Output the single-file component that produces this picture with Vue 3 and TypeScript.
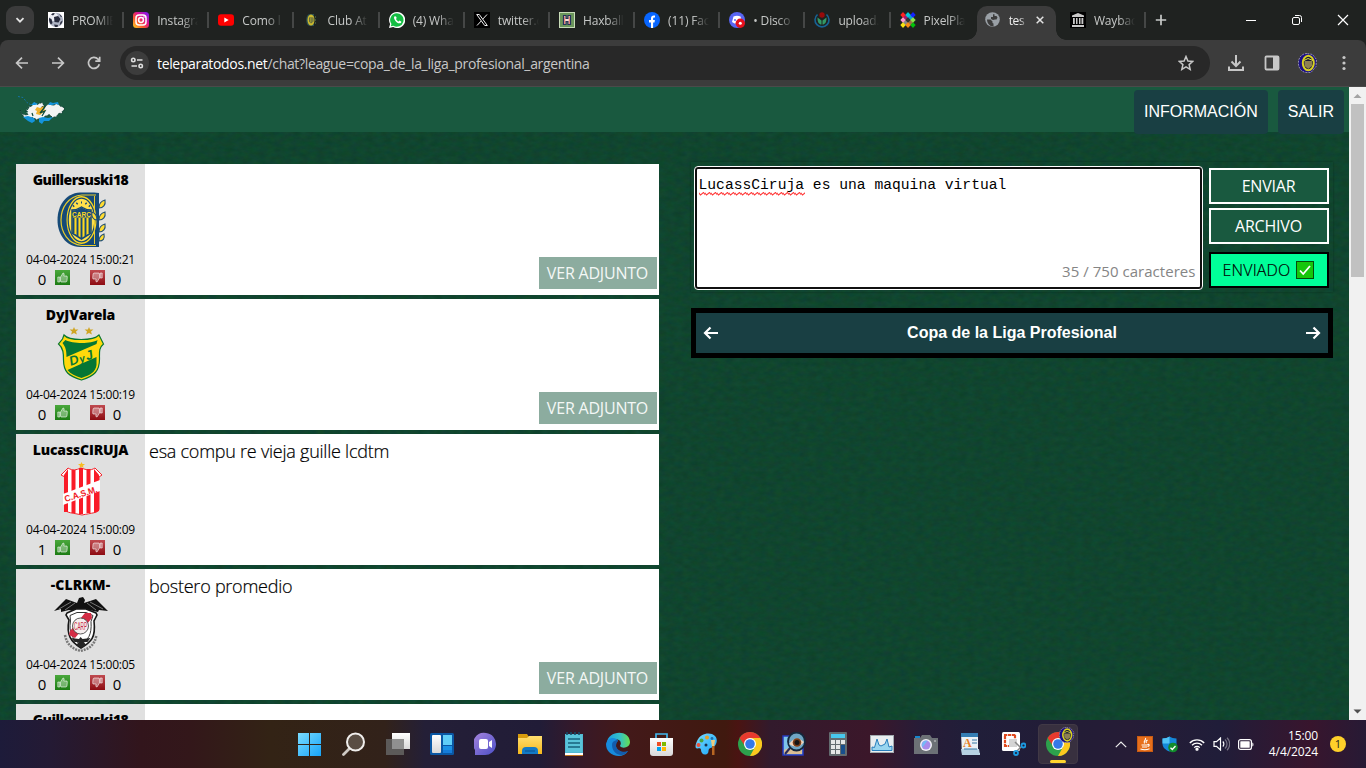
<script setup lang="ts">
interface Tab {
  icon: string
  title: string
  active?: boolean
}
interface Post {
  user: string
  crest: string
  date: string
  up: number
  down: number
  text?: string
  attachment?: boolean
}

const tabs: Tab[] = [
  { icon: 'ball', title: 'PROMIE' },
  { icon: 'instagram', title: 'Instagra' },
  { icon: 'youtube', title: 'Como l' },
  { icon: 'club', title: 'Club At' },
  { icon: 'whatsapp', title: '(4) Wha' },
  { icon: 'x', title: 'twitter.c' },
  { icon: 'haxball', title: 'Haxball' },
  { icon: 'facebook', title: '(11) Fac' },
  { icon: 'discord', title: '• Disco' },
  { icon: 'commons', title: 'upload.' },
  { icon: 'pixel', title: 'PixelPla' },
  { icon: 'globe', title: 'tes', active: true },
  { icon: 'archive', title: 'Waybac' },
]

const posts: Post[] = [
  { user: 'Guillersuski18', crest: 'rosario', date: '04-04-2024 15:00:21', up: 0, down: 0, attachment: true },
  { user: 'DyJVarela', crest: 'defensa', date: '04-04-2024 15:00:19', up: 0, down: 0, attachment: true },
  { user: 'LucassCIRUJA', crest: 'sanmartin', date: '04-04-2024 15:00:09', up: 1, down: 0, text: 'esa compu re vieja guille lcdtm' },
  { user: '-CLRKM-', crest: 'river', date: '04-04-2024 15:00:05', up: 0, down: 0, text: 'bostero promedio', attachment: true },
]

const apps = [
  'start', 'search', 'taskview', 'widgets', 'chat', 'folder', 'notepad', 'edge', 'store',
  'paint', 'chrome', 'magnify', 'calc', 'perf', 'camera', 'wordpad', 'snip',
]
</script>

<template>
  <div class="desktop">
    <svg class="sprites" width="0" height="0">
      <defs>
        <filter id="weave" x="0" y="0" width="100%" height="100%" color-interpolation-filters="sRGB">
          <feTurbulence type="fractalNoise" baseFrequency=".12 .2" numOctaves="4" seed="7" />
          <feColorMatrix values=".05 0 0 0 .038  0 .06 0 0 .240  0 0 .07 0 .147  0 0 0 0 1" />
        </filter>
        <pattern id="zigzag" width="6" height="4" patternUnits="userSpaceOnUse"><path d="M-1 0 1.500 3 4.500.5 7 3.500" fill="none" stroke="#ff3b3b" stroke-width="1.100" /></pattern>
        <linearGradient id="green" x2="0" y2="1"><stop stop-color="#4aa83c" /><stop offset="1" stop-color="#1c7c14" /></linearGradient>
        <linearGradient id="red" x2="0" y2="1"><stop stop-color="#c04a50" /><stop offset="1" stop-color="#8d0c12" /></linearGradient>
        <linearGradient id="insta" x1="0" y1="1" x2="1" y2="0"><stop stop-color="#ffd521" /><stop offset=".35" stop-color="#f8572d" /><stop offset=".6" stop-color="#e0148c" /><stop offset="1" stop-color="#6f1cff" /></linearGradient>
        <linearGradient id="winblue" x2="1" y2="1"><stop stop-color="#7adcff" /><stop offset="1" stop-color="#17a4f8" /></linearGradient>
        <linearGradient id="chatfill" x2="1" y2="1"><stop stop-color="#a684dc" /><stop offset="1" stop-color="#4c50c8" /></linearGradient>
        <linearGradient id="folderfill" x2="0" y2="1"><stop stop-color="#ffdf70" /><stop offset="1" stop-color="#f5b81c" /></linearGradient>
        <linearGradient id="edgetop" x2="1"><stop stop-color="#1c9ce0" /><stop offset=".55" stop-color="#33c1c9" /><stop offset="1" stop-color="#66e04f" /></linearGradient>
        <linearGradient id="paper" x2="0" y2="1"><stop stop-color="#fff" /><stop offset="1" stop-color="#d8d8d8" /></linearGradient>
      </defs>

      <symbol id="ball" viewBox="0 0 16 16"><rect width="16" height="16" fill="#fff" /><circle cx="8" cy="8" r="7.200" fill="#aeb4c4" /><circle cx="6" cy="5" r="4" fill="#eceef4" /><path d="M6 5l4-1 2.500 3-2 3.500-4-.5zM1 6l2.500 1 1 4-1.500 1.500C1.500 11 .8 8 1 6zM6 12.500l4 .5-.5 2H7zM12.500 10l2-1.500c0 2-1.500 4-3 5zM3 2.500l2-1.500 2 .6-2 1.800zM11 1.500l3 3-1 .8z" fill="#272b3c" /></symbol>
      <symbol id="instagram" viewBox="0 0 16 16"><rect width="16" height="16" rx="3.500" fill="url(#insta)" /><rect x="3" y="3" width="10" height="10" rx="3" fill="none" stroke="#fff" stroke-width="1.500" /><circle cx="8" cy="8" r="2.400" fill="none" stroke="#fff" stroke-width="1.500" /><circle cx="11" cy="5" r=".8" fill="#fff" /></symbol>
      <symbol id="youtube" viewBox="0 0 16 16"><rect y="2.300" width="16" height="11.400" rx="3" fill="#f00" /><path d="M6.300 5.500v5L10.700 8z" fill="#fff" /></symbol>
      <symbol id="club" viewBox="0 0 16 16"><path d="M7 2c-5 0-5 12 0 12h4V2z" fill="#2c5153" /><ellipse cx="8" cy="8" rx="3.500" ry="5.600" fill="#cdb92c" /><path d="M6 5.500h4.500v4L8 11.500 6 9.500z" fill="#4a5d45" /><path d="M7.300 6v4.500M9 6v4.500" stroke="#cdb92c" stroke-width=".7" /><path d="M12.500 4v9" stroke="#3a563e" stroke-dasharray="2 1" /></symbol>
      <symbol id="whatsapp" viewBox="0 0 16 16"><path d="M8 0a8 8 0 0 0-6.900 12L0 16l4.200-1.100A8 8 0 1 0 8 0z" fill="#fff" /><path d="M8 1.300A6.700 6.700 0 0 0 2.500 12l-.7 2.300 2.500-.6A6.700 6.700 0 1 0 8 1.300z" fill="#14bd43" /><path d="M5.700 4.200c-2.400 1.400 2.200 8.200 5.600 7 1.500-.6 1.100-1.800.4-2l-1.200-.7-.8 1c-1-.3-2.300-1.400-2.700-2.500l.7-.9-.7-1.700z" fill="#fff" /></symbol>
      <symbol id="x" viewBox="0 0 16 16"><rect width="16" height="16" fill="#000" /><path d="M2.700 2.500h2.600l8 11h-2.600zM13 2.500 8.700 7.200M7.200 9 3 13.500" fill="none" stroke="#eee" /></symbol>
      <symbol id="haxball" viewBox="0 0 16 16"><rect width="16" height="16" fill="#c8dcb8" /><rect x="1" y="1" width="14" height="14" fill="#6a965b" /><path d="M4.500 3.500h2.500v3h2v-3h2.500v9H9V9.500H7v3H4.500z" fill="#f7e2d8" stroke="#26315c" stroke-width="1.200" /><path d="M5.700 4.500v7.500M10.300 4.500v7.500" stroke="#df6053" stroke-width=".8" /></symbol>
      <symbol id="facebook" viewBox="0 0 16 16"><circle cx="8" cy="8" r="8" fill="#0866ff" /><path d="M7 16v-5.500H5V8h2V6.500C7 4 8.200 3.200 11 3.500v2.100c-1.600-.1-1.900.3-1.900 1.300V8h1.800l-.4 2.500H9.100V16z" fill="#fff" /></symbol>
      <symbol id="discord" viewBox="0 0 16 16"><circle cx="8" cy="8" r="8" fill="#5865f2" /><path d="M4.500 4.500c2-1 5-1 7 0l1.500 5-2.500 2h-5L3 10z" fill="#fff" /><circle cx="6" cy="8" r="1" fill="#5865f2" /><circle cx="11.300" cy="11.300" r="4.700" fill="#e5101d" /><circle cx="11.300" cy="11.300" r="1.500" fill="#fff" /></symbol>
      <symbol id="commons" viewBox="0 0 16 16"><path d="M3.500 2.500a7 7 0 1 0 9 0" fill="none" stroke="#176395" stroke-width="1.600" /><path d="M3.500 5.500c0 5 1.500 7 4 7V8.500zM12.500 5.500c0 5-1.500 7-4 7V8.500z" fill="#339966" /><circle cx="8" cy="3" r="2.700" fill="#970b0b" /></symbol>
      <symbol id="pixel" viewBox="0 0 16 16"><path d="M5.500 2.500l3 3-3 3-3-3z" fill="#a3166b" /><path d="M10.500 2.500l3 3-3 3-3-3z" fill="#099dce" /><path d="M5.500 7.500l3 3-3 3-3-3z" fill="#888" /><path d="M10.500 7.500l3 3-3 3-3-3z" fill="#9c724b" /><path d="M3 0l2.700 3L3 5.700.3 3z" fill="#f22" /><path d="M8 0l2.700 3L8 5.700 5.300 3z" fill="#00c9d8" /><path d="M13 0l2.700 3L13 5.700 10.300 3z" fill="#1422ff" /><path d="M3 5.300 5.700 8 3 10.700.3 8z" fill="#ff9bd1" /><path d="M8 5.300 10.700 8 8 10.700 5.300 8z" fill="#333" /><path d="M13 5.300 15.700 8 13 10.700 10.300 8z" fill="#8ce64c" /><path d="M3 10.300 5.700 13 3 16 .3 13z" fill="#f8e512" /><path d="M8 10.300l2.700 2.700L8 16l-2.700-3z" fill="#fa8a16" /><path d="M13 10.300l2.700 2.700L13 16l-2.700-3z" fill="#00c20b" /></symbol>
      <symbol id="globe" viewBox="0 0 16 16"><circle cx="7.500" cy="7.500" r="7.300" fill="#9aa0a6" /><path d="M2 7.500h3.500l2 2v1.500l1 .5v3c-4 0-6.500-3.500-6.500-7zM8 2.200h1.500V4h2l1 1.500-1 2H10L8 8 6 7V5h2V3z" fill="#3c3c3c" /></symbol>
      <symbol id="archive" viewBox="0 0 16 16"><rect width="16" height="16" fill="#000" /><path d="M2 3.500 8 1l6 2.500V5H2zM2 13h12v2H2zM3 6h1.800v6H3zM6 6h1.500v6H6zM9 6h1.500v6H9zM11.500 6h1.800v6h-1.800z" fill="#c8c8c8" /></symbol>
      <symbol id="profile" viewBox="0 0 20 20"><path d="M9 .5C-2.500.5-2.500 19.500 9 19.500h4l5-6 .500-7-4-5z" fill="#1b0f86" stroke="#aaa6bd" stroke-width=".8" stroke-dasharray="2 1" /><ellipse cx="10.300" cy="10" rx="5.500" ry="7.300" fill="#171b32" stroke="#d7d022" stroke-width="2" /><path d="M6.500 8h7.500v5l-3.700 3-3.800-3z" fill="#8d7f52" /><path d="M6 7.500l4-2 5 2" fill="none" stroke="#e4dd3d" /></symbol>
      <symbol id="islands" viewBox="0 0 48 30"><path d="M1 .5l5 1 4 5 5 3 5 4" fill="none" stroke="#1572a5" stroke-dasharray="2 1.500" /><path d="M3 14l3 4.500 5 .5-2-4 2-4 4-1 3-4 2 2.500 5-2 2 3-3 2 2 1 6-5 4 2 4-2 4 3 3 1v3l-2 .5.500 2-4 .5-2 3-4 1-3-3-5 2-2 4-2-2-4 1-4-2-5 2-4-3z" fill="#f2f4f3" stroke="#0a3331" stroke-width=".8" stroke-dasharray="2 1.500" /><path d="M14 9l3-3 4 2-3 1zM31 9l2-3 3 1 5-1 1 3-3-1-4 1zM6 21l5-1 6 2 1 3-3 2-4-2zM22 22l4-1 5 1 5-1-4 4h-5l-2 3-3-2z" fill="#1494dc" /><path d="M20 11l3 1 4-2-1 3 3 1-6 5-4-1 1-3-2-1z" fill="#efb12b" /><path d="M28 11l-5 6 5-2-3 5M12 11l-2 3M15 17l1 3M8 15l3 1" fill="none" stroke="#0b4938" stroke-width="1.200" /></symbol>

      <symbol id="thumb" viewBox="0 0 15 15"><path d="M2.800 7h2v5h-2zM5.500 7 8 3c1.500 0 1.300 1.600.8 3H12l.3 1.300-.4 4L11 12H6L5.500 11z" fill="#fff" fill-opacity=".35" stroke="#fff" stroke-opacity=".7" stroke-width=".8" /></symbol>
      <symbol id="rosario" viewBox="0 0 56 56"><path d="M46 1v54H27C-3 54-3 2 27 .5h14z" fill="#164a78" /><path d="M43 3H29C1 5 1 51 29 53.500h14" fill="none" stroke="#e9cc2d" stroke-width="1.200" /><ellipse cx="28.500" cy="28" rx="15" ry="24" fill="#ffd91f" /><ellipse cx="28.500" cy="28" rx="13.300" ry="21.800" fill="#ffe04a" stroke="#164a78" stroke-width="1.200" /><path d="M19 18q5 0 9.500-3 4.500 3 9.500 3v23l-9.500 6-9.500-6z" fill="#ffd91f" stroke="#164a78" stroke-width="1.500" /><path d="M20.500 26v15M24.500 26v18M28.500 26v20M32.500 26v18M36.500 26v15" stroke="#164a78" stroke-width="1.900" /><path d="M19 18.500q5 0 9.500-3 4.500 3 9.500 3v7H19z" fill="#164a78" /><text x="28.500" y="25" text-anchor="middle" font-family="Liberation Sans, sans-serif" font-size="6.500" font-weight="700" fill="#ffd91f">CARC</text><path d="M20 14.500l1-1M23.500 12l1-1M28 10.500h1M32.500 11l1 1M36 13.500l1 1" stroke="#164a78" stroke-width="2" /><path d="M41.500 4v48" stroke="#e9cc2d" stroke-width="1" /><g fill="#ffdb30" stroke="#245175" stroke-width="1.100"><path d="M52 8c1 5-2 8-6 8 0-4 2-7 6-8zM52 20c1 5-2 8-6 8 0-4 2-7 6-8zM52 32c1 5-2 8-6 8 0-4 2-7 6-8zM51 42c1 5-1 7-5 7 0-3 2-6 5-7zM39 20c3 1 5 4 5 8-4 0-6-4-5-8z" /></g></symbol>
      <symbol id="defensa" viewBox="0 0 56 56"><path d="M21 0l1.100 2.500h3.300l-2.400 2 .9 3.100L21 5.900l-2.900 1.700.9-3.100-2.400-2h3.300zM36 0l1.100 2.500h3.300l-2.400 2 .9 3.100L36 5.900l-2.900 1.700.9-3.100-2.400-2h3.300z" fill="#d0a522" /><path d="M11 8c5 6 29 6 35 0l4.500 9c-5 4-4 9-4 15 0 12-5 17-18 21C15.500 49 10.500 45 10.500 33c0-6 0-12-5-16l4-5z" fill="#ffd90b" stroke="#087730" stroke-width="1.200" /><path d="M12.500 13c7 4 26 4 32 0L43.500 17 13.500 30c0-7-1-10-4-14zM43.500 30 14.500 43c3 4 8 6 14 8 9-3 14-6 15-13z" fill="#057634" /><g fill="#087537" font-family="Liberation Sans, sans-serif" font-weight="700" font-style="italic" transform="rotate(-18 29 31)"><text x="16" y="35" font-size="13">D</text><text x="26" y="35" font-size="10">y</text><text x="33" y="35" font-size="13">J</text></g></symbol>
      <symbol id="sanmartin" viewBox="0 0 56 56"><path d="M28.500 0l1 2h2.500l-2 1.800.6 2.300-2.100-1.300-2.100 1.300.6-2.300L25 2h2.500z" fill="#f7bd24" /><path d="M15 6c5 3 8 2 13 0 6 2 9 3 14 0l7 7-3 2v32c0 4-8 4-17 6-8-2-17-2-17-6V15l-4-2z" fill="#fff" stroke="#f3232b" /><path d="M11 13l4-6v43h-4zM18.500 8h4v43h-4zM26 6h4v46h-4zM33.500 7h4v44h-4zM41 7l5 6v36l-5 2z" fill="#f91b27" /><path d="M10 32l37-14v11L10 43z" fill="#fff" /><text transform="translate(12.500 40) rotate(-17)" textLength="34" lengthAdjust="spacingAndGlyphs" font-family="Liberation Sans, sans-serif" font-weight="700" font-size="8.800" fill="#ef1724">C.A.S.M.</text></symbol>
      <symbol id="river" viewBox="0 0 56 56"><path d="M1 14 13 2l11 4 2-5 4-1 2 3-1 3 12-4 12 12-9-1-1 2-9-2-7 2H23l-7-2-8 2V12z" fill="#111" /><path d="M6 12l12-7M12 13l10-7M50 12 37 5M43 13l-9-7" stroke="#bbb" stroke-width=".6" /><path d="M12 38c2 11 9 14 15.500 16 8-2 14-5 16-16" fill="none" stroke="#787878" stroke-width="2.500" stroke-dasharray="2 1" /><path d="M14 16l9-4h10l10 4 1 2-3 6c2 17-3 21-13 27-10-6-15-13-12-28l-3-5z" fill="#fff" stroke="#171717" stroke-width="1.600" /><path d="M17 18.500l7-3h9l7 3-2 6c1 14-3 18-10.500 23.500-8-6-12-12-10-24z" fill="none" stroke="#333" /><path d="M32 16h6l1 5-17 20-6-3 1-4z" fill="#d32c45" /><circle cx="27.500" cy="29" r="8" fill="#f6eeee" stroke="#333" stroke-width=".8" /><text x="27.500" y="33" text-anchor="middle" textLength="13" lengthAdjust="spacingAndGlyphs" font-family="Liberation Sans, sans-serif" font-size="11" fill="#c52b43">CARP</text><path d="M18 41l8 1 1.500-2 2 2 8-1-3 4h-4l3 3-5 3-5-3 2-3h-4z" fill="#252525" /></symbol>

      <symbol id="start" viewBox="0 0 24 24"><path d="M0 1h11v11H0zM12 1h11v11H12zM0 13h11v11H0zM12 13h11v11H12z" fill="url(#winblue)" /></symbol>
      <symbol id="search" viewBox="0 0 24 24"><path d="M8 16l-6.500 6.500" stroke="#cfcac4" stroke-width="2.800" stroke-linecap="round" /><circle cx="13.500" cy="10" r="8.500" fill="#594d43" stroke="#f0eeec" stroke-width="2" /></symbol>
      <symbol id="taskview" viewBox="0 0 24 24"><path d="M6 1h18v16H6z" fill="url(#paper)" /><path d="M0 7h18v16H0z" fill="#5c5a59" /><path d="M6 7h12v10H6z" fill="#909090" /></symbol>
      <symbol id="widgets" viewBox="0 0 24 24"><rect y="1" width="24" height="22" rx="1.500" fill="#0a57a4" /><rect x="2" y="3" width="9" height="18" rx="1" fill="url(#paper)" /><path d="M13 3h9v10h-9z" fill="#60cef7" /><path d="M13 14h9v7h-9z" fill="#1b91e4" /><path d="M13 18h9v3h-9z" fill="#157cda" /></symbol>
      <symbol id="chat" viewBox="0 0 24 24"><path d="M12 1a11 11 0 1 1-2 22H1v-5A11 11 0 0 1 12 1z" fill="url(#chatfill)" /><rect x="5" y="7" width="9" height="10" rx="2" fill="#fff" /><path d="M15 10l3-2v8l-3-2z" fill="#fff" /></symbol>
      <symbol id="folder" viewBox="0 0 24 24"><path d="M0 2h9l2 3h12v17H0z" fill="#d79b0d" /><path d="M0 6h9l2-2h13v18H0z" fill="url(#folderfill)" /><path d="M4 22v-3q0-4 4-4h8q4 0 4 4v3z" fill="#127ac6" /><path d="M7 19h10" stroke="#0b518e" /></symbol>
      <symbol id="notepad" viewBox="0 0 24 24"><path d="M3 2h18v21H3z" fill="#52b9d3" /><path d="M4 3h16v17H4z" fill="#59c4da" /><path d="M5 0v3M9 0v3M13 0v3M17 0v3" stroke="#154b67" stroke-width="1.600" /><path d="M6 7h12M6 11h12M6 15h12" stroke="#17617e" stroke-width="1.600" /><path d="M3 21h18v2H3z" fill="#fff" /><path d="M3 23h18v1H3z" fill="#c37824" /></symbol>
      <symbol id="edge" viewBox="0 0 24 24"><path d="M1 12C0-1 23-4 24 10c0 6-8 7-10 4 4-7-7-10-13-2z" fill="url(#edgetop)" /><path d="M0 12C1 5 10 4 12 9c-3 2-3 6 0 9 4 3 7 3 10 1-4 7-14 6-19 1-2-2-3-5-3-8z" fill="#178bdd" /><path d="M6 13c0-5 6-5 6-5 0 1-2 3-2 6 1 5 8 7 12 5-5 8-16 3-16-6z" fill="#135dad" /></symbol>
      <symbol id="store" viewBox="0 0 24 24"><path d="M6 6V2h11v4" fill="none" stroke="#42b7ed" stroke-width="1.700" /><path d="M0 6h23v15q0 3-3 3H3q-3 0-3-3z" fill="url(#paper)" /><path d="M7 10h4v4H7z" fill="#ef5025" /><path d="M12 10h4v4h-4z" fill="#7fba00" /><path d="M7 15h4v4H7z" fill="#00a4ef" /><path d="M12 15h4v4h-4z" fill="#ffb900" /></symbol>
      <symbol id="paint" viewBox="0 0 24 24"><path d="M3 9C6 2 13 .5 18 2c5 2 6 7 3.500 11-2 3-5 2-6.500 4-1 2 0 4-2 5-3 1.500-6-.5-6-4 0-2-1.500-2-3.500-1.500C.5 17 1.500 12 3 9z" fill="url(#winblue)" /><circle cx="7.500" cy="8.500" r="2" fill="#4aa540" /><circle cx="13" cy="5.500" r="2" fill="#e6a225" /><circle cx="4.500" cy="13" r="2" fill="#e8533d" /><circle cx="18" cy="6.500" r="1.400" fill="#1d6fae" /><circle cx="12" cy="13" r="1.500" fill="#17344f" /><path d="M17 8h4l-1 7h-2z" fill="#eccb80" /><path d="M18 14h2.500v9H18z" fill="#b86622" /></symbol>
      <symbol id="chrome" viewBox="0 0 24 24"><circle cx="12" cy="12" r="12" fill="#2da14c" /><path d="M1.600 6A12 12 0 0 1 22.400 6H12L7 14z" fill="#e83a2e" /><path d="M22.400 6A12 12 0 0 1 12 24l5-9-5-9z" fill="#fcc91e" /><circle cx="12" cy="12" r="6" fill="#fff" /><circle cx="12" cy="12" r="4.800" fill="#3478e8" /></symbol>
      <symbol id="magnify" viewBox="0 0 24 24"><path d="M1 4h20v19H1z" fill="#7cc4ea" stroke="#2738bb" stroke-width="1.500" /><path d="M2 18l7-3 11 3v4H2z" fill="#d9bf95" /><path d="M8 16l-5 6" stroke="#272a58" stroke-width="2" /><ellipse cx="14.500" cy="9.500" rx="8.500" ry="9" fill="#6fa5c4" stroke="#14283c" stroke-width="1.800" /><path d="M7 12q7-10 15-2-6 8-15 2z" fill="#f3d5bc" /><circle cx="15" cy="10.500" r="4.300" fill="#7a3d18" /><circle cx="15" cy="10.500" r="2.500" fill="#151414" /></symbol>
      <symbol id="calc" viewBox="0 0 24 24"><rect x="3" width="18" height="24" rx="1" fill="#636c70" /><path d="M5 2h14v4H5z" fill="#48c8ed" /><path d="M5 8h4v4H5zM10 8h4v4h-4zM15 8h4v4h-4zM5 13h4v4H5zM10 13h4v4h-4zM5 18h4v4H5zM10 18h4v4h-4z" fill="#e4e6e6" /><path d="M15 13h4v9h-4z" fill="#184f8c" /></symbol>
      <symbol id="perf" viewBox="0 0 24 24"><rect x=".5" y="3.500" width="23" height="17" fill="#e9eef0" stroke="#a3abb0" /><path d="M2 18.500V15l2.500.5L7 7l2 6 2 1 2-1 2-1 2-5 2 8 3-1v4.500z" fill="#98d5ef" stroke="#287ebc" /></symbol>
      <symbol id="camera" viewBox="0 0 24 24"><path d="M1 4h5v3H1z" fill="#1687cd" /><path d="M0 6h6l2-3h8l2 3h6v16H0z" fill="#6c7176" /><circle cx="12" cy="13" r="6" fill="#f0f1f4" /><circle cx="12" cy="13" r="4.500" fill="#a98bea" /><path d="M8.500 15.500a4.500 4.500 0 0 1 5-6.700z" fill="#74b9f5" /><circle cx="21" cy="9" r=".8" fill="#ddd" /></symbol>
      <symbol id="wordpad" viewBox="0 0 24 24"><path d="M3 1h17v20h2v2H4z" fill="#ebf1f5" /><path d="M3 1h17v4H3z" fill="#347db3" /><path d="M3 17h18l1 6H4z" fill="#b7d3e3" /><text x="5" y="15" font-family="Liberation Serif, serif" font-size="12" font-weight="700" fill="#e67e24">A</text><path d="M14 8h5M14 11h5M6 17h13" stroke="#3979a6" /></symbol>
      <symbol id="snip" viewBox="0 0 24 24"><rect width="18" height="19" rx="1.500" fill="#fff" /><path d="M2 3h12M3 4v11M2 14h5M13 3v4" fill="none" stroke="#e04a1f" stroke-width="2.200" stroke-dasharray="3.300 .7" /><path d="M7 7h8v8H7z" fill="#d4d4d4" /><path d="M13 10l5 5M15 19l4-4" stroke="#888" stroke-width="1.500" /><g fill="none" stroke="#1b9be2" stroke-width="1.800"><circle cx="14" cy="21" r="2" /><circle cx="21.500" cy="13.500" r="2" /></g></symbol>
    </svg>

    <div class="tabstrip">
      <div class="tab-search"><svg width="10" height="10" viewBox="0 0 10 10"><path d="M1.500 3.200 5 6.700 8.500 3.200" fill="none" stroke="#e3e3e3" stroke-width="1.800" /></svg></div>
      <div v-for="t in tabs" :key="t.icon" class="tab" :class="{ active: t.active, before: t.icon === 'pixel' }">
        <svg class="fav" viewBox="0 0 16 16"><use :href="'#' + t.icon" /></svg>
        <span class="tab-title">{{ t.title }}</span>
        <svg v-if="t.active" class="tab-close" viewBox="0 0 8 8"><path d="M.7.7l6.600 6.600M7.300.7.7 7.300" stroke="#e3e3e3" stroke-width="1.500" /></svg>
      </div>
      <svg class="plus" viewBox="0 0 12 12"><path d="M6 .8v10.400M.8 6h10.400" stroke="#c8cac9" stroke-width="1.700" /></svg>
      <div class="win-controls">
        <svg width="12" height="12" viewBox="0 0 12 12"><path d="M1 6.500h10" stroke="#fff" /></svg>
        <svg width="12" height="12" viewBox="0 0 12 12" fill="none" stroke="#fff"><rect x="1.500" y="3.500" width="7" height="7" rx="1.500" /><path d="M4 1.500h4.500a2 2 0 0 1 2 2V8" /></svg>
        <svg width="12" height="12" viewBox="0 0 12 12"><path d="M1 1l10 10M11 1 1 11" stroke="#fff" stroke-width="1.200" /></svg>
      </div>
    </div>

    <div class="toolbar">
      <div class="nav">
        <svg viewBox="0 0 16 16"><path d="M14 8H2.800M8 2.600 2.600 8 8 13.400" /></svg>
        <svg viewBox="0 0 16 16"><path d="M2 8h11.200M8 2.600 13.400 8 8 13.400" /></svg>
        <svg viewBox="0 0 16 16"><path d="M13.300 9.200A5.500 5.500 0 1 1 12 4.200l1.500 1.600M13.700 1.800v4.400H9.300" /></svg>
      </div>
      <div class="omnibox">
        <div class="site"><svg width="14" height="14" viewBox="0 0 14 14" fill="none" stroke="#dedede" stroke-width="1.600"><circle cx="3.300" cy="4" r="1.700" /><path d="M7 4h5.500M1.500 10H7" /><circle cx="10.700" cy="10" r="1.700" /></svg></div>
        <span class="url"><b>teleparatodos.net</b>/chat?league=copa_de_la_liga_profesional_argentina</span>
        <svg class="star" viewBox="0 0 16 16"><path d="M8 1.500l1.900 4.500 4.900.4-3.700 3.200 1.100 4.800L8 11.900l-4.200 2.500 1.100-4.800L1.200 6.400l4.900-.4z" fill="none" stroke="#c7c7c7" stroke-width="1.500" /></svg>
      </div>
      <div class="tools">
        <svg viewBox="0 0 18 18" fill="none" stroke="#c7c7c7" stroke-width="2"><path d="M9 1v10.500M4.500 7.500 9 12l4.500-4.500M2 12.500V16h14v-3.500" /></svg>
        <svg viewBox="0 0 18 18"><rect x="2.500" y="2.500" width="13" height="13" rx="1" fill="none" stroke="#c7c7c7" stroke-width="1.800" /><path d="M10 2.500h5.500v13H10z" fill="#c7c7c7" /></svg>
        <svg class="avatar" viewBox="0 0 20 20"><use href="#profile" /></svg>
        <svg viewBox="0 0 18 18" fill="#c7c7c7"><circle cx="9" cy="3.500" r="1.600" /><circle cx="9" cy="9" r="1.600" /><circle cx="9" cy="14.500" r="1.600" /></svg>
      </div>
    </div>

    <div class="viewport">
      <div class="page">
        <svg class="cloth" width="1349" height="633"><rect width="1349" height="633" filter="url(#weave)" /></svg>
        <header class="site-header">
          <svg class="map" viewBox="0 0 48 30"><use href="#islands" /></svg>
          <nav class="menu"><a>INFORMACIÓN</a><a>SALIR</a></nav>
        </header>
        <main class="columns">
          <section class="feed">
            <article v-for="(p, i) in posts" :key="i" class="post">
              <aside class="author">
                <strong :class="'by-' + p.crest">{{ p.user }}</strong>
                <svg class="crest" viewBox="0 0 56 56"><use :href="'#' + p.crest" /></svg>
                <time>{{ p.date }}</time>
                <div class="votes">
                  <span>{{ p.up }}</span>
                  <svg viewBox="0 0 15 15"><rect width="15" height="15" fill="url(#green)" /><use href="#thumb" /></svg>
                  <svg class="down" viewBox="0 0 15 15"><rect width="15" height="15" fill="url(#red)" /><g transform="rotate(180 7.500 7.500)"><use href="#thumb" /></g></svg>
                  <span>{{ p.down }}</span>
                </div>
              </aside>
              <div class="body">
                <p>{{ p.text }}</p>
                <button v-if="p.attachment" class="attach">VER ADJUNTO</button>
              </div>
            </article>
            <article class="post">
              <aside class="author"><strong class="by-rosario">Guillersuski18</strong></aside>
              <div class="body"></div>
            </article>
          </section>

          <section class="side">
            <div class="composer">
              <div class="textarea">
                <div class="typed"><span class="misspelt">LucassCiruja<svg class="squiggle" width="106" height="4"><rect width="106" height="4" fill="url(#zigzag)" /></svg></span> es una maquina virtual</div>
                <div class="counter">35 / 750 caracteres</div>
              </div>
              <div class="actions">
                <button>ENVIAR</button>
                <button>ARCHIVO</button>
                <button class="sent"><span>ENVIADO</span><svg width="18" height="18" viewBox="0 0 18 18"><rect x=".5" y=".5" width="17" height="17" fill="#16c60c" stroke="#064a0b" /><path d="M4 9.500l3.200 3.500L14 5" fill="none" stroke="#fff" stroke-width="1.800" /></svg></button>
              </div>
            </div>
            <div class="league">
              <svg viewBox="0 0 16 14"><path d="M15 7H2M7.500 1.500 2 7l5.500 5.500" /></svg>
              <h2>Copa de la Liga Profesional</h2>
              <svg viewBox="0 0 16 14"><path d="M1 7h13M8.500 1.500 14 7l-5.500 5.500" /></svg>
            </div>
          </section>
        </main>
      </div>
      <div class="scrollbar">
        <svg viewBox="0 0 17 17"><path d="M4.500 11 8.500 7l4 4z" fill="#a3a3a3" /></svg>
        <div class="thumb"></div>
        <svg class="arrow-down" viewBox="0 0 17 17"><path d="M4.500 6.500h8l-4 4z" fill="#505050" /></svg>
      </div>
    </div>

    <footer class="taskbar">
      <div class="apps">
        <svg v-for="a in apps" :key="a" viewBox="0 0 24 24"><use :href="'#' + a" /></svg>
        <div class="running">
          <svg viewBox="0 0 24 24"><use href="#chrome" /></svg>
          <svg class="running-badge" viewBox="0 0 20 20"><use href="#profile" /></svg>
        </div>
      </div>
      <div class="tray">
        <svg width="12" height="7" viewBox="0 0 12 7"><path d="M.8 6.200 6 1l5.200 5.200" fill="none" stroke="#eee" stroke-width="1.200" /></svg>
        <svg class="java" width="16" height="16" viewBox="0 0 16 16"><rect width="16" height="16" rx="1" fill="#e76f1c" /><rect x=".5" y=".5" width="15" height="15" fill="none" stroke="#c75b14" /><path d="M8.500 2c1 2-2.500 2.500-1 5.500M10.500 4c-1.500 1-2 1.500-1 3M4.500 9h6M5 11h5M10.500 8.500c2.500-.5 2 1.500 0 2M3.500 13c3 1 6 1 9-.3" fill="none" stroke="#fff" stroke-width="1.100" /></svg>
        <svg class="shield" width="17" height="17" viewBox="0 0 17 17"><path d="M7.500.5C9 1.800 12 2.400 14.500 2.400v5.100c0 4-3 6.500-7 8-4-1.500-7-4-7-8V2.400C3 2.400 6 1.800 7.500.5z" fill="#1587d8" /><path d="M7.500.5v7H.5V2.400C3 2.400 6 1.800 7.500.5z" fill="#4fc3f7" /><path d="M7.500 7.500h7c0 4-3 6.500-7 8z" fill="#0b4d9c" /><circle cx="11" cy="11.500" r="4.800" fill="#128c2c" /><path d="M8.500 11.700l1.800 1.800 3.200-3.500" fill="none" stroke="#fff" stroke-width="1.300" /></svg>
        <svg class="wifi" width="16" height="13" viewBox="0 0 16 13" fill="none" stroke="#fff" stroke-width="1.300"><path d="M.8 5a10 10 0 0 1 14.400 0M3 7.300a7 7 0 0 1 10 0M5.200 9.600a4 4 0 0 1 5.600 0" /><circle cx="8" cy="11.200" r="1" fill="#fff" /></svg>
        <svg class="volume" width="17" height="14" viewBox="0 0 17 14" fill="none" stroke="#fff" stroke-width="1.200"><path d="M1 4.700h2.500L7.500 1v12L3.500 9.300H1zM9.800 4.500a3.500 3.500 0 0 1 0 5" /><path d="M12 2.500a6 6 0 0 1 0 9M14 .8a8.500 8.500 0 0 1 0 12.400" stroke="#777384" /></svg>
        <svg class="battery" width="16" height="11" viewBox="0 0 16 11"><rect x=".6" y=".6" width="12.800" height="9.800" rx="2" fill="none" stroke="#fff" stroke-width="1.200" /><rect x="2.300" y="2.300" width="9.400" height="6.400" rx=".5" fill="#fff" /><path d="M14.300 3.500c1.500 0 1.500 4 0 4z" fill="#fff" /></svg>
        <div class="clock"><span>15:00</span><span>4/4/2024</span></div>
        <div class="notif">1</div>
      </div>
    </footer>
  </div>
</template>

<style>
html, body { margin: 0; overflow: hidden; background: #11472f; }
</style>

<style scoped>
* { box-sizing: border-box; }
.desktop { width: 1366px; height: 768px; overflow: hidden; display: flex; flex-direction: column; font-family: "Open Sans", "Noto Sans", sans-serif; background: #202221; }
.desktop svg { display: block; flex: none; }

.tabstrip { flex: none; height: 40px; display: flex; align-items: flex-start; background: #1f2220; padding-left: 6px; }
.tab-search { width: 28px; height: 28px; margin-top: 6px; margin-right: 4px; border-radius: 9px; background: #3b3b3b; display: grid; place-items: center; flex: none; }
.tab { position: relative; flex: none; width: 85.170px; height: 34px; margin-top: 6px; padding: 0 0 6px 10px; display: flex; align-items: center; }
.tab::after { content: ""; position: absolute; right: -1px; top: 6px; width: 2px; height: 16px; background: #454746; }
.tab.before::after { display: none; }
.fav { width: 16px; height: 16px; }
.tab-title { width: 41px; margin-left: 8px; overflow: hidden; white-space: nowrap; color: #c6c8c7; font-size: 12px; letter-spacing: -.15px; line-height: 18px; margin-top: 2px; -webkit-mask-image: linear-gradient(90deg, #000 60%, transparent); mask-image: linear-gradient(90deg, #000 60%, transparent); }
.tab.active { width: 79px; margin-left: 2px; margin-right: 4.170px; padding-left: 8px; background: #3c3c3c; border-radius: 10px 10px 0 0; }
.tab.active .tab-title { width: 18px; margin-left: 8px; color: #eee; letter-spacing: -.4px; }
.tab.active::before, .tab.active::after { content: ""; position: absolute; top: auto; bottom: 0; width: 10px; height: 10px; background: radial-gradient(circle at 0 0, transparent 9.500px, #3c3c3c 10px); }
.tab.active::before { left: -10px; }
.tab.active::after { right: -10px; background: radial-gradient(circle at 100% 0, transparent 9.500px, #3c3c3c 10px); }
.tab-close { width: 8px; height: 8px; margin-left: 9px; }
.plus { width: 12px; height: 12px; margin: 14px 0 0 10px; }
.win-controls { display: flex; gap: 34px; margin: 14px 0 0 78px; }

.toolbar { flex: none; height: 47px; background: #3c3c3c; border-bottom: 1px solid #4a4a4a; border-radius: 8px 8px 0 0; display: flex; padding-top: 6px; }
.nav { display: flex; gap: 20px; padding: 9px 0 0 14px; width: 120px; }
.nav svg { width: 16px; height: 16px; fill: none; stroke: #c7c7c7; stroke-width: 1.700; }
.omnibox { width: 1090px; height: 34px; border-radius: 17px; background: #282828; display: flex; align-items: center; padding-left: 5px; }
.site { width: 24px; height: 24px; border-radius: 50%; background: #3c3c3c; display: grid; place-items: center; }
.url { margin-left: 8px; flex: 1; font-size: 14px; letter-spacing: -.34px; color: #c7c7c7; white-space: nowrap; }
.url b { font-weight: 400; color: #fff; }
.star { width: 16px; height: 16px; margin-right: 16px; }
.tools { display: flex; gap: 18px; padding: 8px 0 0 17px; }
.tools svg { width: 18px; height: 18px; }
.tools .avatar { width: 20px; height: 20px; margin: -1px; }

.viewport { flex: none; height: 633px; display: flex; overflow: hidden; }
.page { position: relative; width: 1349px; height: 633px; overflow: hidden; background: #11472f; }
.cloth { position: absolute; left: 0; top: 0; }
.site-header { position: relative; height: 45px; background: #19593f; display: flex; justify-content: space-between; padding: 3px 5px 0 17px; }
.map { width: 48px; height: 30px; margin-top: 6px; }
.menu { display: flex; gap: 10px; height: 44px; font: 16px/43px "Liberation Sans", Arial, sans-serif; color: #fff; }
.menu a { padding: 0 10px; background: #193f43; border-radius: 4px; }
.columns { position: relative; display: flex; gap: 32px; padding: 32px 16px 0; height: 588px; }

.feed { width: 643px; display: flex; flex-direction: column; gap: 4px; }
.post { flex: none; height: 131px; display: flex; background: #fff; }
.author { width: 129px; background: #e0e0e0; display: flex; flex-direction: column; align-items: center; padding-top: 6px; color: #000; }
.author strong { font-size: 14px; line-height: 19px; font-weight: 800; letter-spacing: -.15px; }
.author .by-rosario { letter-spacing: -.5px; }
.author .by-river { letter-spacing: .1px; }
.crest { width: 56px; height: 56px; margin-top: 3px; }
.author time { font-size: 12px; line-height: 16px; margin-top: 4px; letter-spacing: -.22px; white-space: nowrap; }
.votes { display: flex; align-items: center; margin: 2px 2px 0 0; height: 18px; }
.votes svg { width: 15px; height: 15px; margin-bottom: 3px; }
.votes .down { margin-left: 20px; }
.votes span { width: 25px; text-align: center; font-size: 15px; line-height: 18px; }
.body { flex: 1; display: flex; flex-direction: column; justify-content: space-between; padding: 4px 2px 6px 4px; }
.body p { margin: 0; font-size: 18px; font-weight: 350; line-height: 27px; letter-spacing: -.24px; color: #000; -webkit-text-stroke: .2px #000; }
.attach { align-self: flex-end; width: 118px; height: 32px; border: 0; padding: 0; background: #8cac9f; color: #f4f8f6; font: 500 16px/32px "Open Sans", sans-serif; letter-spacing: -.2px; }

.side { width: 643px; padding: 2px 0 0; display: flex; flex-direction: column; }
.composer { display: flex; margin: -4px 0 0; padding: 4px 4px 0 3px; height: 130px; width: 642px; box-shadow: 0 0 2px rgba(0, 20, 10, .4); }
.textarea { width: 509px; height: 124px; border: 1px solid #fff; border-radius: 4px; padding: 2px; display: flex; background: linear-gradient(#fff, #fff) content-box, #101010; flex-direction: column; justify-content: space-between; }
.typed { font: 14.670px/18px "Liberation Mono", monospace; padding: 7px 0 0 2px; color: #000; white-space: pre; }
.misspelt { position: relative; }
.squiggle { position: absolute; left: 0; bottom: -3px; }
.counter { text-align: right; padding: 0 4px 5px 0; font-size: 15px; line-height: 22px; letter-spacing: .04px; color: #858585; }
.actions { margin: 2px 0 0 6px; display: flex; flex-direction: column; gap: 4px; }
.actions button { width: 120px; height: 36px; border: 2px solid #fff; background: #19593f; color: #fff; padding: 0; font: 16px/30px "Open Sans", sans-serif; letter-spacing: -.2px; }
.actions .sent { margin-top: 4px; background: #00ff99; border-color: #000; color: #000; display: flex; align-items: center; justify-content: center; gap: 6px; font-weight: 350; letter-spacing: .15px; -webkit-text-stroke: .2px #000; }
.league { margin-top: 16px; width: 642px; height: 50px; border: 5px solid #000; background: #193f43; display: flex; align-items: center; justify-content: space-between; padding: 0 6px 0 7px; }
.league svg { width: 16px; height: 14px; fill: none; stroke: #fff; stroke-width: 2.200; }
.league h2 { margin: 0; font: 700 16px/20px "Liberation Sans", Arial, sans-serif; color: #fff; }

.scrollbar { width: 17px; background: #f1f1f1; display: flex; flex-direction: column; align-items: center; }
.scrollbar svg { width: 17px; height: 17px; }
.thumb { width: 13px; height: 173px; background: #c1c1c1; }
.arrow-down { margin-top: auto; }

.taskbar { flex: none; height: 48px; display: flex; padding-left: 298px; background: linear-gradient(90deg, #1d1b3a 0, #241a34 50px, #32151c 140px, #33171a 190px, #332315 270px, #32221a 385px, #241f37 425px, #211c37 540px, #35192a 575px, #43191a 620px, #40190f 725px, #4a1412 738px, #321a2c 770px, #3b172a 870px, #271c37 920px, #201e39 975px, #231c36 1080px, #261c36 1130px, #201d39 1220px, #38152d 1310px, #271a35 1366px); }
.apps { display: flex; gap: 20px; padding-top: 12px; }
.apps > svg { width: 24px; height: 24px; }
.running { position: relative; width: 40px; height: 40px; margin: -8px 0 0 -8px; padding: 8px; border-radius: 4px; background: #38303f; border: 1px solid #413946; }
.running > svg { width: 24px; height: 24px; margin: -1px; }
.running .running-badge { position: absolute; width: 16px; height: 16px; right: 3px; top: 3px; }
.running::after { content: ""; position: absolute; left: 11px; bottom: 0; width: 16px; height: 3px; border-radius: 2px; background: #ffd52e; }
.tray { display: flex; align-items: center; margin-left: 37px; color: #fff; }
.java { margin-left: 10px; }
.shield { margin-left: 9px; }
.wifi { margin-left: 10px; }
.volume { margin-left: 8px; }
.battery { margin-left: 8px; }
.clock { width: 64px; display: flex; flex-direction: column; text-align: right; font-size: 12px; line-height: 16px; letter-spacing: -.1px; }
.notif { width: 16px; height: 16px; margin-left: 12px; border-radius: 50%; background: #ffd02a; color: #222; font-size: 11px; line-height: 16px; text-align: center; }
</style>
